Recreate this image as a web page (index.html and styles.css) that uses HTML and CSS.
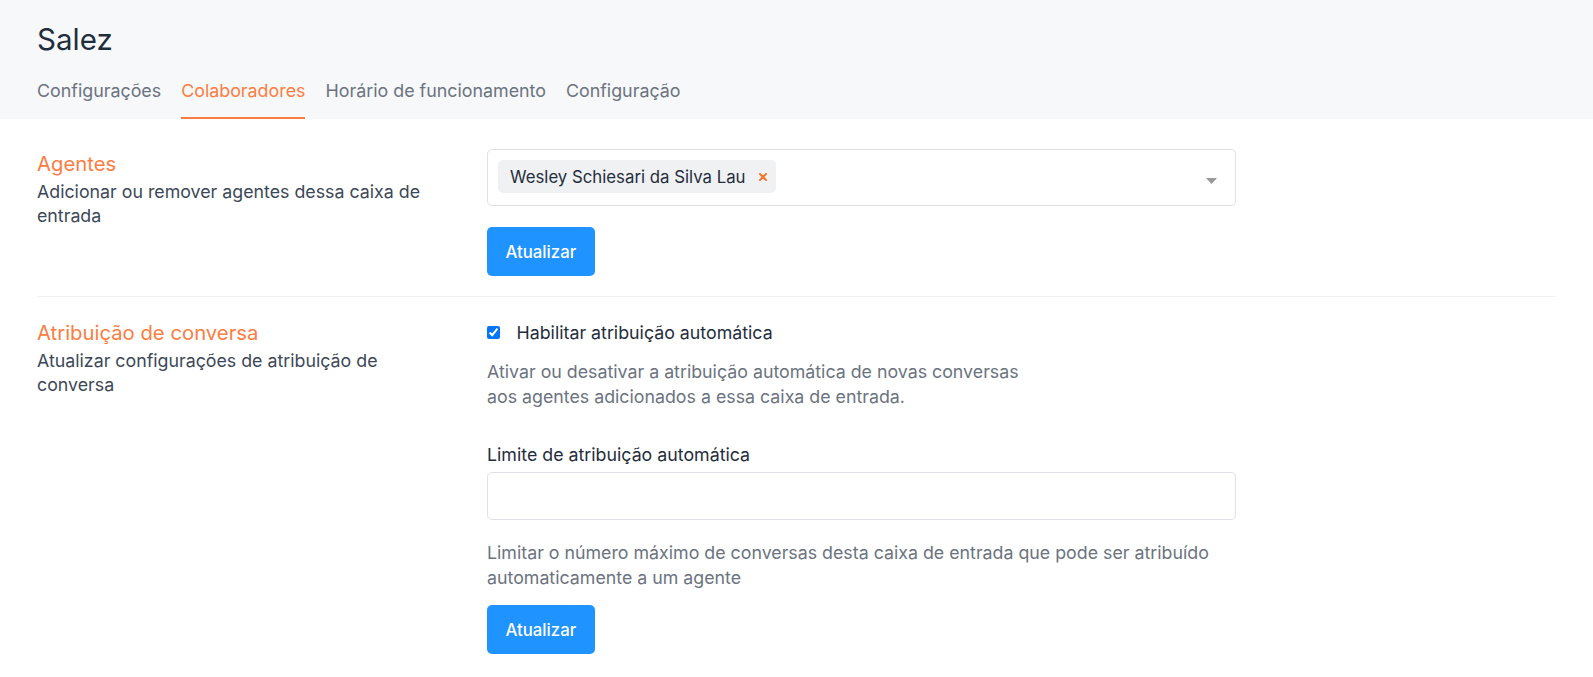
FILE: index.html
```html
<!DOCTYPE html>
<html lang="pt-BR">
<head>
<meta charset="utf-8">
<title>Salez - Colaboradores</title>
<link rel="stylesheet" href="styles.css">
</head>
<body>
<header class="page-header">
  <h1 class="page-title">Salez</h1>
  <nav class="tabs">
    <a class="tab">Configurações</a>
    <a class="tab tab-active">Colaboradores</a>
    <a class="tab">Horário de funcionamento</a>
    <a class="tab">Configuração</a>
  </nav>
</header>
<main class="content">
  <section class="section section-first">
    <div class="section-title">
      <h2 class="section-heading">Agentes</h2>
      <p class="section-desc">Adicionar ou remover agentes dessa caixa de entrada</p>
    </div>
    <div class="section-body">
      <div class="multiselect">
        <span class="chip">Wesley Schiesari da Silva Lau
          <svg class="chip-x" width="8" height="8" viewBox="0 0 8 8"><path d="M1 1L7 7M7 1L1 7" stroke="#f2762e" stroke-width="2" stroke-linecap="round"/></svg>
        </span>
        <svg class="caret" width="11" height="6" viewBox="0 0 11 6"><path d="M0 0H11L5.5 6Z" fill="#999"/></svg>
      </div>
      <button class="btn btn-first">Atualizar</button>
    </div>
  </section>
  <section class="section section-second">
    <div class="section-title">
      <h2 class="section-heading">Atribuição de conversa</h2>
      <p class="section-desc">Atualizar configurações de atribuição de conversa</p>
    </div>
    <div class="section-body">
      <label class="check-row"><input type="checkbox" class="check" checked><span>Habilitar atribuição automática</span></label>
      <p class="help help-auto">Ativar ou desativar a atribuição automática de novas conversas aos agentes adicionados a essa caixa de entrada.</p>
      <label class="field-label">Limite de atribuição automática</label>
      <input type="text" class="text-input">
      <p class="help help-limit">Limitar o número máximo de conversas desta caixa de entrada que pode ser atribuído automaticamente a um agente</p>
      <button class="btn btn-second">Atualizar</button>
    </div>
  </section>
</main>
</body>
</html>
```
FILE: styles.css
```css
html, body {
  margin: 0;
  padding: 0;
  background: #ffffff;
  font-family: "Inter", "Noto Sans", sans-serif;
  color: #1f2d3d;
}

.page-header {
  background: #f7f8fa;
  padding: 22px 37px 0;
}

.page-title {
  margin: 0;
  font-size: 29.5px;
  line-height: 35px;
  font-weight: 400;
  color: #1f2d3d;
}

.tabs {
  display: flex;
  gap: 20px;
  margin-top: 23px;
}

.tab {
  font-size: 17.85px;
  line-height: 22px;
  padding-bottom: 15px;
  border-bottom: 2px solid transparent;
  color: #6b7380;
  cursor: pointer;
}

.tab-active {
  color: #fb7d42;
  border-bottom-color: #fb7d42;
}

.content {
  padding: 0 37px;
}

.section {
  display: grid;
  grid-template-columns: 450px 749px;
  border-bottom: 1px solid #eef0f2;
}

.section-first {
  padding: 30px 0 20px;
}

.section-first .section-title {
  padding-top: 3px;
}

.section-second {
  padding: 24px 0 24px;
  border-bottom: none;
}

.section-title {
  padding-right: 50px;
}

.section-heading {
  margin: 0 0 4px;
  font-size: 20.3px;
  line-height: 24px;
  font-weight: 400;
  color: #fb7d42;
}

.section-desc {
  margin: 0;
  font-size: 17.8px;
  line-height: 24px;
  color: #3c4858;
}

.section-body {
  display: flex;
  flex-direction: column;
  align-items: flex-start;
}

.multiselect {
  box-sizing: border-box;
  width: 749px;
  height: 57px;
  display: flex;
  align-items: flex-start;
  padding: 10px 18px 12px 10px;
  border: 1px solid #e0e0e6;
  border-radius: 5px;
  background: #fff;
}

.chip {
  display: flex;
  align-items: center;
  gap: 13px;
  height: 33px;
  padding: 1px 9px 0 12px;
  box-sizing: border-box;
  background: #f0f1f3;
  border-radius: 5px;
  font-size: 16.8px;
  color: #1f2d3d;
}

.chip-x {
  display: block;
}

.caret {
  margin-left: auto;
  margin-top: 18px;
  display: block;
}

.btn {
  border: none;
  border-radius: 5px;
  background: #1f93ff;
  color: #fff;
  font-family: "Inter", "Noto Sans", sans-serif;
  font-size: 16.8px;
  font-weight: 500;
  height: 49px;
  padding: 0 18.5px;
  cursor: pointer;
}

.btn-first {
  margin-top: 21px;
}

.check-row {
  display: flex;
  align-items: flex-start;
  gap: 16.5px;
  font-size: 17.8px;
  line-height: 24px;
  color: #1f2d3d;
}

.check {
  width: 13px;
  height: 13px;
  margin: 5px 0 0 0;
}

.help {
  margin: 0;
  font-size: 17.8px;
  line-height: 25px;
  color: #6b7380;
}

.help-auto {
  margin-top: 14px;
  max-width: 552px;
}

.field-label {
  margin-top: 34px;
  font-size: 17.8px;
  line-height: 24px;
  color: #1f2d3d;
}

.text-input {
  box-sizing: border-box;
  width: 749px;
  height: 48px;
  margin-top: 4.5px;
  border: 1px solid #e0e0e6;
  border-radius: 5px;
  background: #fff;
  font-family: inherit;
  font-size: 16.8px;
  padding: 0 12px;
}

.help-limit {
  margin-top: 20px;
  max-width: 749px;
}

.btn-second {
  margin-top: 15.5px;
}
```
